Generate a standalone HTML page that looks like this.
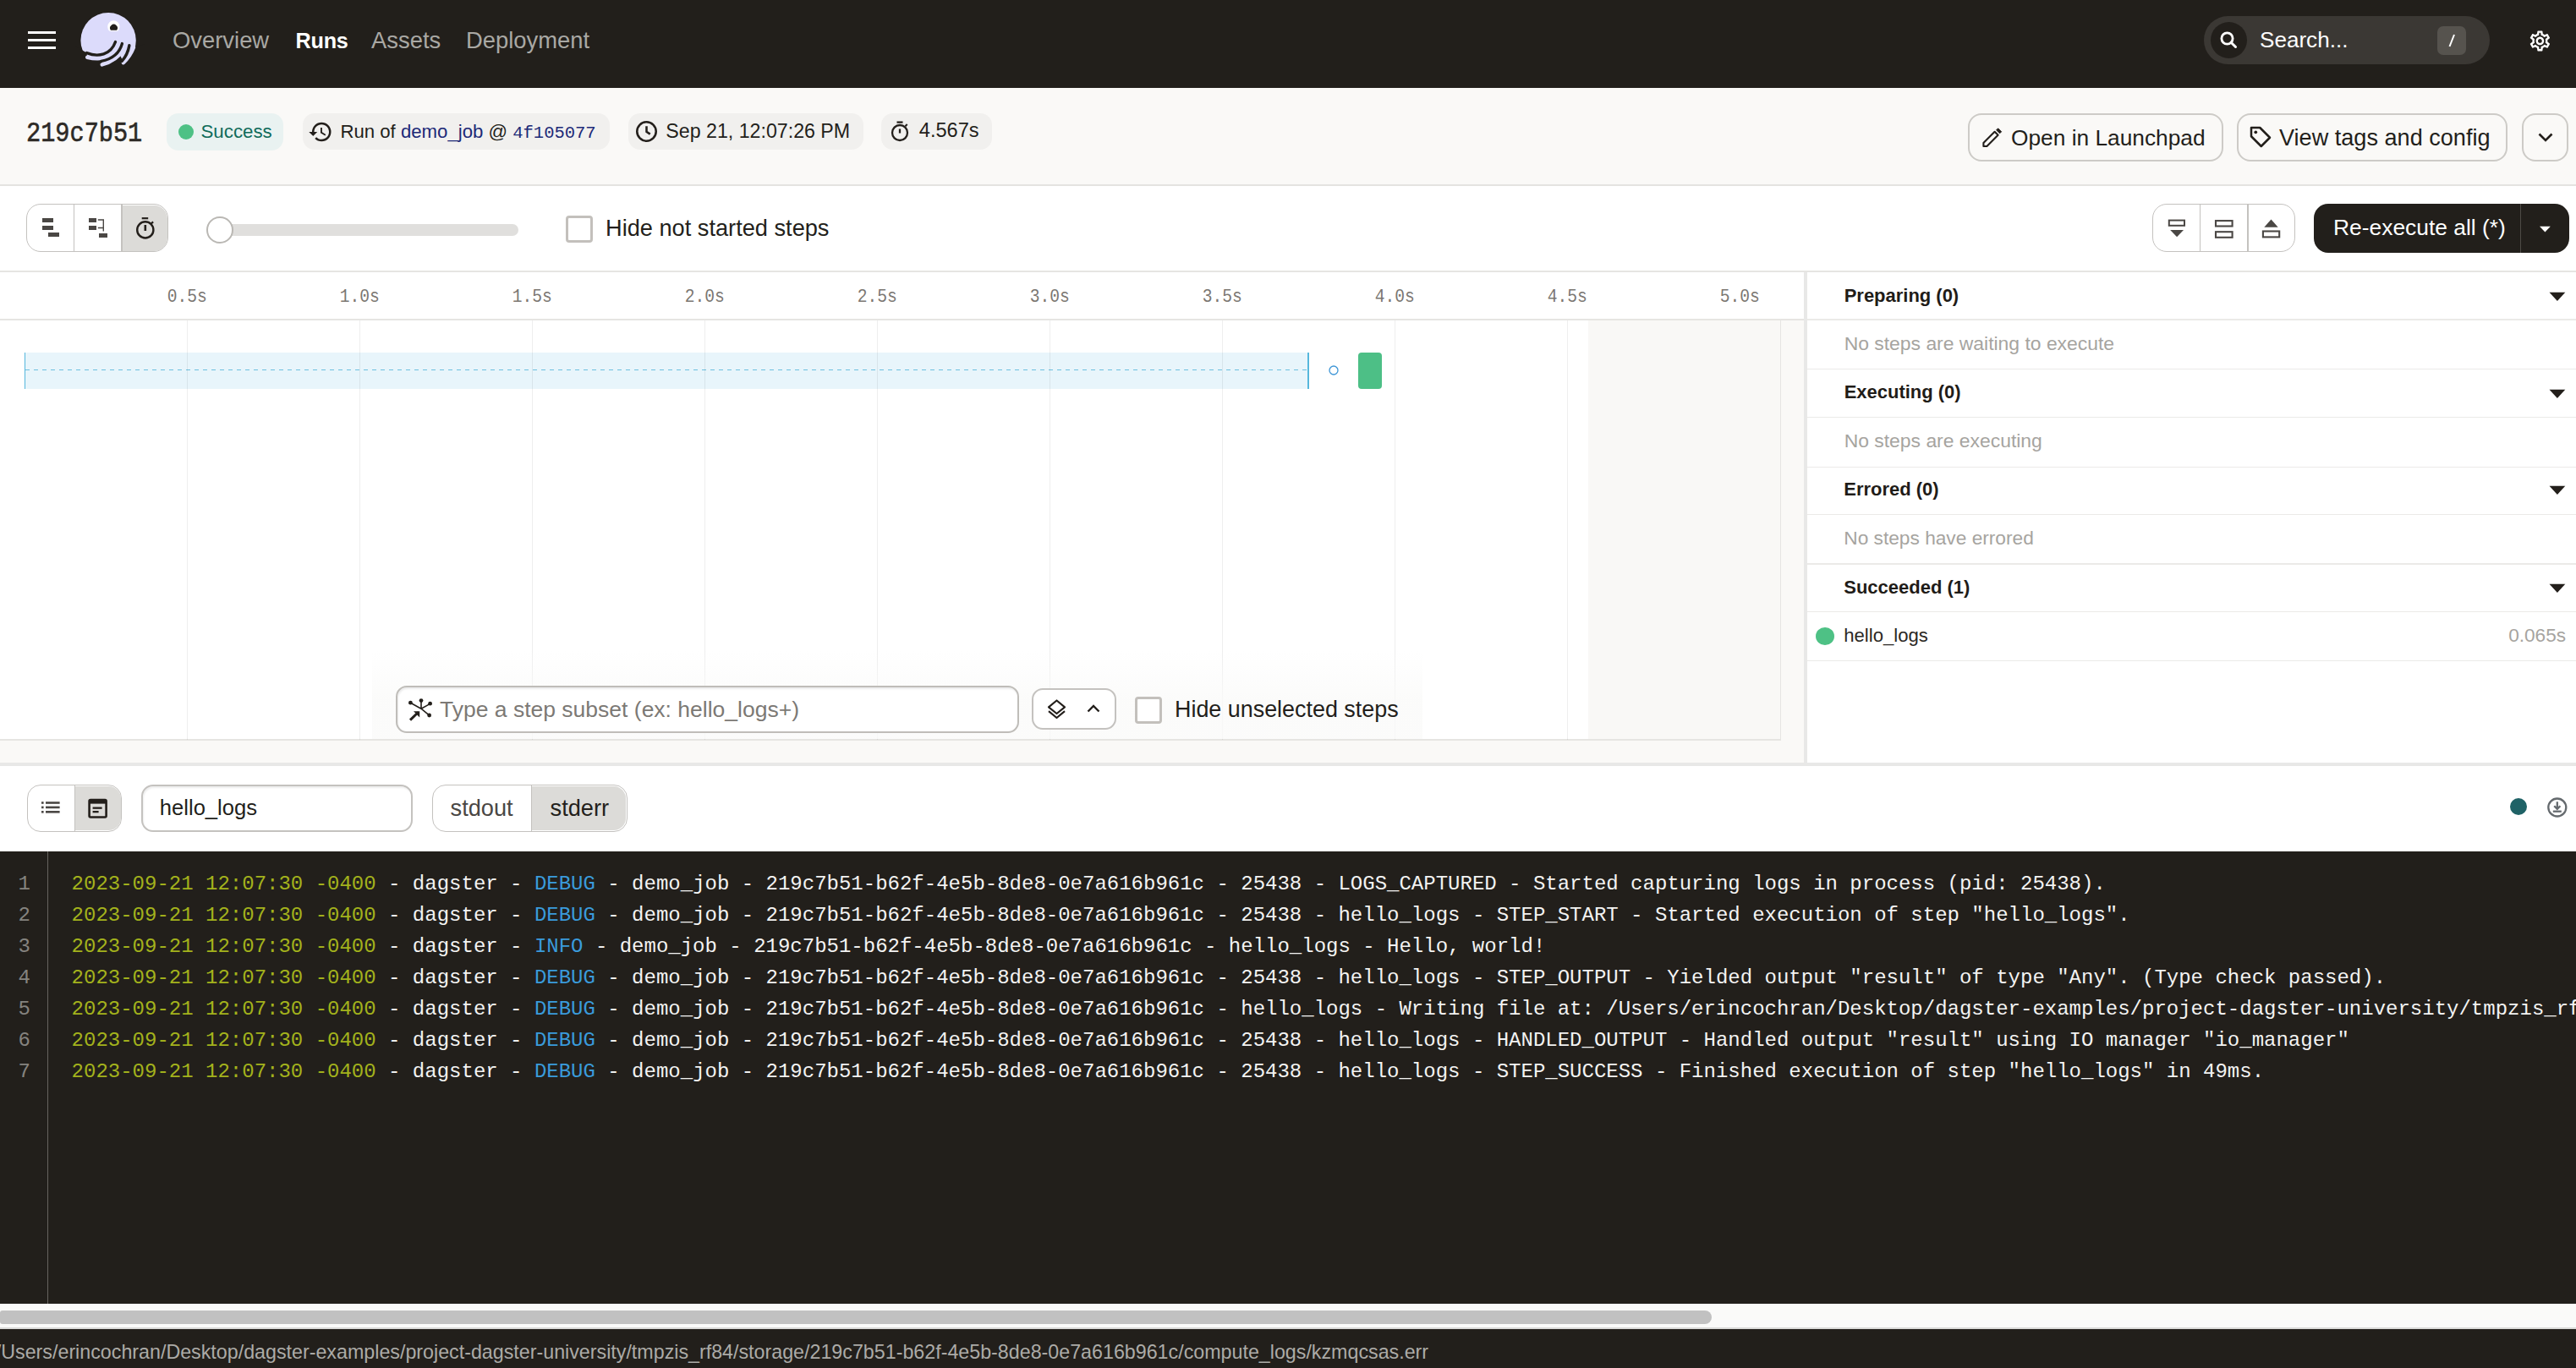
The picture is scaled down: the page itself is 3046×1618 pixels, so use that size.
<!DOCTYPE html>
<html><head><meta charset="utf-8"><style>
*{box-sizing:border-box;margin:0;padding:0}
html,body{width:3046px;height:1618px;overflow:hidden;background:#fff;font-family:"Liberation Sans",sans-serif;color:#231f1b;position:relative}
.a{position:absolute}
.t{white-space:nowrap}
svg{display:block}
</style></head><body>
<div class="a" style="left:0px;top:0px;width:3046px;height:104px;background:#221f1b"></div>
<div class="a" style="left:33px;top:37px;width:33px;height:3.4px;background:#fff"></div>
<div class="a" style="left:33px;top:46px;width:33px;height:3.4px;background:#fff"></div>
<div class="a" style="left:33px;top:55px;width:33px;height:3.4px;background:#fff"></div>
<svg class="a" style="left:88px;top:8px;" width="84" height="80" viewBox="0 0 84 80"><circle cx="40.1" cy="39.7" r="32.7" fill="#dcdbfb"/>
<path d="M0 46 L14.6 54.6 L15.2 59.8 Q24.56 62.14 33.05 60.9 L32.7 68.4 Q45.7 65.1 53.7 56.2 L57.9 66.1 Q66 58.5 70 48 L84 44 L84 80 L0 80 Z" fill="#221f1b"/>
<g stroke="#dcdbfb" stroke-width="4.5" fill="none" stroke-linecap="round">
<path d="M15.2 59.8 Q36 65 52.6 52.6"/>
<path d="M32.7 68.4 Q50 64 58.5 49.7"/>
<path d="M57.9 66.1 Q66 58.5 70 48"/>
</g>
<g stroke="#221f1b" stroke-width="3.4" fill="none" stroke-linecap="round">
<path d="M14.6 54.6 C28 60 43 57 48.5 41.5"/>
<path d="M31.6 64.3 C44 62 53 56 56.4 43.6"/>
<path d="M56.1 64.3 C60 60 63.5 54 64.9 45.6"/>
</g>
<path d="M41.45 28.7 A7.15 7.15 0 1 1 51.25 28.7Z" fill="#fff"/>
<path d="M42.95 27.8 A4.4 4.4 0 1 1 50.05 27.8Z" fill="#221f1b"/></svg>
<div class="a t " style="left:204px;top:28.52px;line-height:38.36px;font-size:27.4px;color:#a9a8a4;font-weight:normal;">Overview</div>
<div class="a t " style="left:349.5px;top:30.82px;line-height:35.28px;font-size:25.2px;color:#ffffff;font-weight:bold;letter-spacing:-0.2px">Runs</div>
<div class="a t " style="left:439px;top:28.52px;line-height:38.36px;font-size:27.4px;color:#a9a8a4;font-weight:normal;">Assets</div>
<div class="a t " style="left:551px;top:28.52px;line-height:38.36px;font-size:27.4px;color:#a9a8a4;font-weight:normal;">Deployment</div>
<div class="a" style="left:2606px;top:19px;width:338px;height:57px;background:#3b3834;border-radius:29px"></div>
<div class="a" style="left:2614px;top:26px;width:43px;height:43px;background:#221f1b;border-radius:50%"></div>
<svg class="a" style="left:2622px;top:34px;" width="28" height="28" viewBox="0 0 28 28"><circle cx="11.5" cy="11.5" r="6.6" stroke="#fff" stroke-width="2.8" fill="none"/><path d="M16.2 16.2 L21.5 21.5" stroke="#fff" stroke-width="3" stroke-linecap="round"/></svg>
<div class="a t " style="left:2672px;top:29.48px;line-height:36.54px;font-size:26.1px;color:#ffffff;font-weight:normal;">Search...</div>
<div class="a" style="left:2882px;top:31px;width:34px;height:34px;background:#56534e;border-radius:7px"></div>
<svg class="a" style="left:2882px;top:31px;" width="34" height="34" viewBox="0 0 34 34"><path d="M20 10 L14.5 24" stroke="#fff" stroke-width="2"/></svg>
<svg class="a" style="left:2988.6px;top:33.6px;" width="28.8" height="28.8" viewBox="0 0 24 24"><path fill="#fff" d="M19.43 12.98c.04-.32.07-.64.07-.98 0-.34-.03-.66-.07-.98l2.11-1.650c.19-.15.24-.42.12-.64l-2-3.46a.5.5 0 00-.61-.22l-2.49 1c-.52-.4-1.08-.73-1.69-.98l-.38-2.65A.488.488 0 0014 2h-4c-.25 0-.46.18-.49.42l-.38 2.65c-.61.25-1.17.59-1.69.98l-2.49-1a.566.566 0 00-.18-.03c-.17 0-.34.09-.43.25l-2 3.46c-.13.22-.07.49.12.64l2.11 1.65c-.04.32-.07.65-.07.98 0 .33.03.66.07.98l-2.11 1.65c-.19.15-.24.42-.12.64l2 3.46a.5.5 0 00.61.22l2.49-1c.52.4 1.08.73 1.690.98l.38 2.65c.03.24.24.42.49.42h4c.25 0 .46-.18.49-.42l.38-2.65c.61-.25 1.17-.59 1.69-.98l2.49 1c.06.02.12.03.18.03.17 0 .34-.09.43-.25l2-3.46c.12-.22.07-.49-.12-.64l-2.11-1.65zm-1.98-1.71c.04.31.05.52.05.73 0 .21-.02.43-.05.73l-.14 1.13.89.7 1.08.84-.7 1.21-1.27-.51-1.04-.42-.9.68c-.43.32-.84.56-1.25.73l-1.06.43-.16 1.13-.2 1.35h-1.4l-.19-1.35-.16-1.13-1.06-.43c-.43-.18-.83-.41-1.23-.71l-.91-.7-1.06.43-1.27.51-.7-1.21 1.08-.84.89-.7-.14-1.13c-.03-.31-.05-.54-.05-.74s.02-.43.05-.73l.14-1.13-.89-.7-1.08-.84.7-1.21 1.27.51 1.04.42.9-.68c.43-.32.84-.56 1.25-.73l1.06-.43.16-1.13.2-1.35h1.39l.19 1.35.16 1.13 1.06.43c.43.18.83.41 1.23.71l.91.7 1.06-.43 1.27-.51.7 1.21-1.07.85-.89.7.14 1.13zM12 8c-2.21 0-4 1.79-4 4s1.79 4 4 4 4-1.79 4-4-1.79-4-4-4zm0 6c-1.1 0-2-.9-2-2s.9-2 2-2 2 .9 2 2-.9 2-2 2z"/></svg>
<div class="a" style="left:0px;top:104px;width:3046px;height:115px;background:#faf9f7"></div>
<div class="a" style="left:0px;top:217.5px;width:3046px;height:2px;background:#e4e3e0"></div>
<div class="a t " style="left:31px;top:139.87px;line-height:40.04px;font-size:28.6px;color:#2d2a26;font-weight:normal;font-family:'Liberation Mono',monospace;transform:scaleY(1.14);transform-origin:0 27.63px;-webkit-text-stroke:0.5px #2d2a26">219c7b51</div>
<div class="a" style="left:197px;top:134px;width:138px;height:44px;background:#e9f2f1;border-radius:14px"></div>
<div class="a" style="left:211px;top:147px;width:18px;height:18px;background:#4ec185;border-radius:50%"></div>
<div class="a t " style="left:237.5px;top:139.66px;line-height:31.22px;font-size:22.3px;color:#106c5b;font-weight:normal;">Success</div>
<div class="a" style="left:358px;top:134px;width:363px;height:43px;background:#f1f0ee;border-radius:14px"></div>
<svg class="a" style="left:364px;top:140.5px;" width="30" height="30" viewBox="0 0 24 24"><path fill="#231f1b" d="M13 3a9 9 0 00-9 9H1l3.89 3.89.07.14L9 12H6c0-3.87 3.13-7 7-7s7 3.13 7 7-3.13 7-7 7c-1.93 0-3.68-.79-4.94-2.06l-1.42 1.42A8.954 8.954 0 0013 21a9 9 0 000-18zm-1 5v5l4.28 2.54.72-1.21-3.5-2.08V8H12z"/></svg>
<div class="a t " style="left:402.4px;top:139.76px;line-height:31.08px;font-size:22.2px;color:#231f1b;font-weight:normal;">Run of <span style="color:#1d2a78">demo_job</span> @ <span style="font-family:'Liberation Mono',monospace;color:#1d2a78;font-size:20.5px">4f105077</span></div>
<div class="a" style="left:743px;top:134px;width:278px;height:43px;background:#f1f0ee;border-radius:14px"></div>
<svg class="a" style="left:750px;top:141px;" width="29" height="29" viewBox="0 0 24 24"><circle cx="12" cy="12" r="9.3" stroke="#231f1b" stroke-width="2.1" fill="none"/><path d="M12 6.8V12.2l3.5 2.4" stroke="#231f1b" stroke-width="2.1" fill="none"/></svg>
<div class="a t " style="left:787.3px;top:138.72px;line-height:32.48px;font-size:23.2px;color:#231f1b;font-weight:normal;">Sep 21, 12:07:26 PM</div>
<div class="a" style="left:1042px;top:134px;width:131px;height:43px;background:#f1f0ee;border-radius:14px"></div>
<svg class="a" style="left:1051px;top:140.5px;" width="26" height="28" viewBox="0 0 26 28"><circle cx="13" cy="16" r="9" stroke="#231f1b" stroke-width="2.3" fill="none"/><path d="M13 11.5v5" stroke="#231f1b" stroke-width="2.3"/><path d="M9.5 3.6h7" stroke="#231f1b" stroke-width="2.3"/><path d="M19.5 8.3l2.2-2.2" stroke="#231f1b" stroke-width="2.1"/></svg>
<div class="a t " style="left:1086.8px;top:138.3px;line-height:33.04px;font-size:23.6px;color:#231f1b;font-weight:normal;">4.567s</div>
<div class="a" style="left:2327.3px;top:134.2px;width:302.2px;height:57.2px;border:2px solid #cdcbc7;border-radius:16px"></div>
<svg class="a" style="left:2343px;top:150px;" width="26" height="26" viewBox="0 0 26 26"><path d="M2.4 23 V19 L15.6 5.8 L19.6 9.8 L6.4 23 Z" stroke="#231f1b" stroke-width="2.1" fill="none" stroke-linejoin="round"/><path d="M17.6 3.8 L19.6 1.8 L23.6 5.8 L21.6 7.8Z" fill="#231f1b" stroke="#231f1b" stroke-width="1" stroke-linejoin="round"/></svg>
<div class="a t " style="left:2378px;top:144.77px;line-height:36.82px;font-size:26.3px;color:#231f1b;font-weight:normal;">Open in Launchpad</div>
<div class="a" style="left:2644.6px;top:134.2px;width:320.6px;height:57.2px;border:2px solid #cdcbc7;border-radius:16px"></div>
<svg class="a" style="left:2658px;top:147px;" width="30" height="30" viewBox="0 0 24 24"><path fill="none" stroke="#231f1b" stroke-width="2" stroke-linejoin="round" d="M3.2 3.2h8.2l9.4 9.4-8.2 8.2-9.4-9.4z"/><circle cx="7.4" cy="7.4" r="1.5" fill="#231f1b"/></svg>
<div class="a t " style="left:2695px;top:143.93px;line-height:37.94px;font-size:27.1px;color:#231f1b;font-weight:normal;">View tags and config</div>
<div class="a" style="left:2982px;top:134.2px;width:55.4px;height:57.2px;border:2px solid #cdcbc7;border-radius:16px"></div>
<svg class="a" style="left:2999px;top:154px;" width="22" height="16" viewBox="0 0 22 16"><path d="M3.5 4.5l7.5 7.5 7.5-7.5" stroke="#231f1b" stroke-width="2.6" fill="none"/></svg>
<div class="a" style="left:31.1px;top:241.1px;width:168.4px;height:57.4px;border:1.6px solid #c4c2bf;border-radius:17px;overflow:hidden"></div>
<div class="a" style="left:143.8px;top:242.7px;width:54.1px;height:54.2px;background:#dcdbd8;border-radius:0 15.5px 15.5px 0"></div>
<div class="a" style="left:86.9px;top:242px;width:1.6px;height:55.5px;background:#c4c2bf"></div>
<div class="a" style="left:143.1px;top:242px;width:1.6px;height:55.5px;background:#c4c2bf"></div>
<div class="a" style="left:49.5px;top:257.9px;width:13.9px;height:4.7px;background:#4a4744"></div>
<div class="a" style="left:49.5px;top:266.9px;width:13.9px;height:4.7px;background:#4a4744"></div>
<div class="a" style="left:56.6px;top:275.3px;width:13.8px;height:4.7px;background:#4a4744"></div>
<div class="a" style="left:104.7px;top:257.9px;width:9px;height:5px;background:#4a4744"></div>
<div class="a" style="left:104.7px;top:267.2px;width:9px;height:4.8px;background:#4a4744"></div>
<div class="a" style="left:117.4px;top:276.2px;width:9.3px;height:5.2px;background:#4a4744"></div>
<svg class="a" style="left:110px;top:255px;" width="20" height="22" viewBox="0 0 20 22"><path d="M5.8 5H12.3V18.6M5.8 14.5H12.3" stroke="#4a4744" stroke-width="1.4" fill="none"/></svg>
<svg class="a" style="left:158px;top:254px;" width="30" height="32" viewBox="0 0 30 32"><circle cx="13.8" cy="17.9" r="9.6" stroke="#231f1b" stroke-width="2.4" fill="none"/><path d="M13.8 12v7" stroke="#231f1b" stroke-width="2.6"/><path d="M9.7 4.2h7.5" stroke="#231f1b" stroke-width="2.2"/><path d="M20.5 10.8l2.6-2.4" stroke="#231f1b" stroke-width="2.2"/></svg>
<div class="a" style="left:262px;top:265.3px;width:351px;height:13.5px;background:#e0dfdd;border-radius:7px"></div>
<div class="a" style="left:244.2px;top:256.1px;width:31.4px;height:31.6px;border:2.8px solid #bab8b4;border-radius:50%;background:#fff"></div>
<div class="a" style="left:668.5px;top:255px;width:32.2px;height:31.5px;border:3.3px solid #c3c0bc;border-radius:4px;background:#fff"></div>
<div class="a t " style="left:716px;top:250.73px;line-height:38.08px;font-size:27.2px;color:#231f1b;font-weight:normal;">Hide not started steps</div>
<div class="a" style="left:2545.2px;top:241.2px;width:168.8px;height:57.3px;border:1.6px solid #c4c2bf;border-radius:17px"></div>
<div class="a" style="left:2600.8px;top:242px;width:1.6px;height:55.5px;background:#c4c2bf"></div>
<div class="a" style="left:2657.2px;top:242px;width:1.6px;height:55.5px;background:#c4c2bf"></div>
<svg class="a" style="left:2560px;top:256px;" width="30" height="28" viewBox="0 0 30 28"><rect x="4.8" y="4.6" width="18.2" height="6.2" stroke="#4a4744" stroke-width="2" fill="none"/><path d="M6.2 16h15.8l-7.9 8.2z" fill="#4a4744"/></svg>
<svg class="a" style="left:2616px;top:256px;" width="30" height="28" viewBox="0 0 30 28"><rect x="4" y="5.1" width="19.6" height="6.4" stroke="#4a4744" stroke-width="2.1" fill="none"/><rect x="4" y="18.2" width="19.6" height="6.6" stroke="#4a4744" stroke-width="2.1" fill="none"/></svg>
<svg class="a" style="left:2672px;top:256px;" width="30" height="28" viewBox="0 0 30 28"><path d="M5.3 12.7h16.4l-8.2-9.3z" fill="#4a4744"/><rect x="3.9" y="17.5" width="19.3" height="6.9" stroke="#4a4744" stroke-width="2.1" fill="none"/></svg>
<div class="a" style="left:2736px;top:241px;width:302px;height:57.7px;background:#221f1b;border-radius:17px"></div>
<div class="a" style="left:2979.5px;top:241px;width:1px;height:57.7px;background:#4d4a45"></div>
<div class="a t " style="left:2759px;top:251.37px;line-height:36.96px;font-size:26.4px;color:#ffffff;font-weight:normal;">Re-execute all (*)</div>
<svg class="a" style="left:3000px;top:264px;" width="20" height="14" viewBox="0 0 20 14"><path d="M3 3.7h12.8l-6.4 6.8z" fill="#fff"/></svg>
<div class="a" style="left:0px;top:320px;width:3046px;height:1.6px;background:#e6e5e2"></div>
<div class="a" style="left:0px;top:376.8px;width:2133px;height:1.8px;background:#e6e5e2"></div>
<div class="a t " style="left:-278.8px;width:1000px;text-align:center;top:339.26px;line-height:27.44px;font-size:19.6px;color:#7b7772;font-weight:normal;font-family:'Liberation Mono',monospace;transform:scaleY(1.12);transform-origin:50% 18.94px">0.5s</div>
<div class="a t " style="left:-74.80000000000001px;width:1000px;text-align:center;top:339.26px;line-height:27.44px;font-size:19.6px;color:#7b7772;font-weight:normal;font-family:'Liberation Mono',monospace;transform:scaleY(1.12);transform-origin:50% 18.94px">1.0s</div>
<div class="a t " style="left:129.20000000000005px;width:1000px;text-align:center;top:339.26px;line-height:27.44px;font-size:19.6px;color:#7b7772;font-weight:normal;font-family:'Liberation Mono',monospace;transform:scaleY(1.12);transform-origin:50% 18.94px">1.5s</div>
<div class="a t " style="left:333.20000000000005px;width:1000px;text-align:center;top:339.26px;line-height:27.44px;font-size:19.6px;color:#7b7772;font-weight:normal;font-family:'Liberation Mono',monospace;transform:scaleY(1.12);transform-origin:50% 18.94px">2.0s</div>
<div class="a t " style="left:537.2px;width:1000px;text-align:center;top:339.26px;line-height:27.44px;font-size:19.6px;color:#7b7772;font-weight:normal;font-family:'Liberation Mono',monospace;transform:scaleY(1.12);transform-origin:50% 18.94px">2.5s</div>
<div class="a t " style="left:741.2px;width:1000px;text-align:center;top:339.26px;line-height:27.44px;font-size:19.6px;color:#7b7772;font-weight:normal;font-family:'Liberation Mono',monospace;transform:scaleY(1.12);transform-origin:50% 18.94px">3.0s</div>
<div class="a t " style="left:945.2px;width:1000px;text-align:center;top:339.26px;line-height:27.44px;font-size:19.6px;color:#7b7772;font-weight:normal;font-family:'Liberation Mono',monospace;transform:scaleY(1.12);transform-origin:50% 18.94px">3.5s</div>
<div class="a t " style="left:1149.2px;width:1000px;text-align:center;top:339.26px;line-height:27.44px;font-size:19.6px;color:#7b7772;font-weight:normal;font-family:'Liberation Mono',monospace;transform:scaleY(1.12);transform-origin:50% 18.94px">4.0s</div>
<div class="a t " style="left:1353.2px;width:1000px;text-align:center;top:339.26px;line-height:27.44px;font-size:19.6px;color:#7b7772;font-weight:normal;font-family:'Liberation Mono',monospace;transform:scaleY(1.12);transform-origin:50% 18.94px">4.5s</div>
<div class="a t " style="left:1557.1999999999998px;width:1000px;text-align:center;top:339.26px;line-height:27.44px;font-size:19.6px;color:#7b7772;font-weight:normal;font-family:'Liberation Mono',monospace;transform:scaleY(1.12);transform-origin:50% 18.94px">5.0s</div>
<div class="a" style="left:1878.4px;top:378.6px;width:226.6px;height:496px;background:#f9f8f6"></div>
<div class="a" style="left:2104.6px;top:378.6px;width:1.6px;height:497.4px;background:#e6e5e2"></div>
<div class="a" style="left:2106.2px;top:378.6px;width:27px;height:523px;background:#faf9f7"></div>
<div class="a" style="left:0px;top:874.3px;width:2106px;height:1.7px;background:#e6e5e2"></div>
<div class="a" style="left:0px;top:876px;width:2133px;height:26px;background:#faf9f7"></div>
<div class="a" style="left:0px;top:901.8px;width:3046px;height:4.2px;background:#e8e8e7"></div>
<div class="a" style="left:2133.2px;top:321.6px;width:3.6px;height:580.2px;background:#e8e8e7"></div>
<div class="a" style="left:29.5px;top:417px;width:1517px;height:43px;background:#e8f5fb"></div>
<div class="a" style="left:28.6px;top:416.8px;width:1.8px;height:43.4px;background:#56b7dc"></div>
<div class="a" style="left:1545.9px;top:416.8px;width:1.8px;height:43.4px;background:#56b7dc"></div>
<div class="a" style="left:30.4px;top:436.6px;width:1515.5px;height:1.7px;background:repeating-linear-gradient(90deg,#6cc0df 0 5px,transparent 5px 10px)"></div>
<svg class="a" style="left:1570px;top:431px;" width="14" height="14" viewBox="0 0 14 14"><circle cx="7" cy="7" r="5" stroke="#3d95d6" stroke-width="1.3" fill="#fff"/></svg>
<div class="a" style="left:1606px;top:417px;width:27.5px;height:43px;background:#4dbf86;border-radius:4px"></div>
<div class="a" style="left:220.7px;top:378.6px;width:1px;height:496px;background:rgba(0,0,0,0.065)"></div>
<div class="a" style="left:424.7px;top:378.6px;width:1px;height:496px;background:rgba(0,0,0,0.065)"></div>
<div class="a" style="left:628.7px;top:378.6px;width:1px;height:496px;background:rgba(0,0,0,0.065)"></div>
<div class="a" style="left:832.7px;top:378.6px;width:1px;height:496px;background:rgba(0,0,0,0.065)"></div>
<div class="a" style="left:1036.7px;top:378.6px;width:1px;height:496px;background:rgba(0,0,0,0.065)"></div>
<div class="a" style="left:1240.7px;top:378.6px;width:1px;height:496px;background:rgba(0,0,0,0.065)"></div>
<div class="a" style="left:1444.7px;top:378.6px;width:1px;height:496px;background:rgba(0,0,0,0.065)"></div>
<div class="a" style="left:1648.7px;top:378.6px;width:1px;height:496px;background:rgba(0,0,0,0.065)"></div>
<div class="a" style="left:1852.7px;top:378.6px;width:1px;height:496px;background:rgba(0,0,0,0.065)"></div>
<div class="a" style="left:2136.8px;top:377.4px;width:910px;height:1.6px;background:#ebeae8"></div>
<div class="a" style="left:2136.8px;top:435.59999999999997px;width:910px;height:1.6px;background:#ebeae8"></div>
<div class="a" style="left:2136.8px;top:492.9px;width:910px;height:1.6px;background:#ebeae8"></div>
<div class="a" style="left:2136.8px;top:551.9000000000001px;width:910px;height:1.6px;background:#ebeae8"></div>
<div class="a" style="left:2136.8px;top:607.6px;width:910px;height:1.6px;background:#ebeae8"></div>
<div class="a" style="left:2136.8px;top:666.4000000000001px;width:910px;height:1.6px;background:#ebeae8"></div>
<div class="a" style="left:2136.8px;top:722.6px;width:910px;height:1.6px;background:#ebeae8"></div>
<div class="a" style="left:2136.8px;top:780.9000000000001px;width:910px;height:1.6px;background:#ebeae8"></div>
<div class="a t " style="left:2180.7px;top:334.5px;line-height:30.76px;font-size:21.97px;color:#1f1c18;font-weight:bold;">Preparing (0)</div>
<div class="a t " style="left:2180.7px;top:390.03px;line-height:32.06px;font-size:22.9px;color:#a6a4a0;font-weight:normal;">No steps are waiting to execute</div>
<div class="a t " style="left:2180.7px;top:449.4px;line-height:30.76px;font-size:21.97px;color:#1f1c18;font-weight:bold;">Executing (0)</div>
<div class="a t " style="left:2180.7px;top:505.33px;line-height:32.06px;font-size:22.9px;color:#a6a4a0;font-weight:normal;">No steps are executing</div>
<div class="a t " style="left:2180.3px;top:564.2px;line-height:30.76px;font-size:21.97px;color:#1f1c18;font-weight:bold;">Errored (0)</div>
<div class="a t " style="left:2180.3px;top:620.74px;line-height:31.78px;font-size:22.7px;color:#a6a4a0;font-weight:normal;">No steps have errored</div>
<div class="a t " style="left:2180.3px;top:679.7px;line-height:30.76px;font-size:21.97px;color:#1f1c18;font-weight:bold;">Succeeded (1)</div>
<svg class="a" style="left:3013px;top:342.6px;" width="22" height="16" viewBox="0 0 22 16"><path d="M1.5 2.8h18.8l-9.4 10.3z" fill="#231f1b"/></svg>
<svg class="a" style="left:3013px;top:457.5px;" width="22" height="16" viewBox="0 0 22 16"><path d="M1.5 2.8h18.8l-9.4 10.3z" fill="#231f1b"/></svg>
<svg class="a" style="left:3013px;top:572.3px;" width="22" height="16" viewBox="0 0 22 16"><path d="M1.5 2.8h18.8l-9.4 10.3z" fill="#231f1b"/></svg>
<svg class="a" style="left:3013px;top:687.8px;" width="22" height="16" viewBox="0 0 22 16"><path d="M1.5 2.8h18.8l-9.4 10.3z" fill="#231f1b"/></svg>
<div class="a" style="left:2147.2px;top:742.2px;width:21.7px;height:21px;background:#4ec185;border-radius:50%"></div>
<div class="a t " style="left:2180.3px;top:736.87px;line-height:30.94px;font-size:22.1px;color:#2b2824;font-weight:normal;">hello_logs</div>
<div class="a t " style="right:12px;top:736.34px;line-height:31.64px;font-size:22.6px;color:#a6a4a0;font-weight:normal;">0.065s</div>
<div class="a" style="left:440px;top:770px;width:1242px;height:104px;background:linear-gradient(180deg,rgba(250,250,249,0) 0%,rgba(250,250,249,.75) 55%)"></div>
<div class="a" style="left:468.2px;top:810.6px;width:736.8px;height:56.7px;border:2px solid #bfbdb9;border-radius:13px;background:#fff;box-shadow:inset 1px 2px 2px rgba(0,0,0,.08)"></div>
<svg class="a" style="left:481px;top:824px;" width="32" height="31" viewBox="0 0 32 31"><g stroke="#231f1b" stroke-width="1.6" fill="none"><path d="M17 14.2L4.4 7.2M17 14.2V5M17 14.2L27.6 8.4M17 14.2L26.4 21.8"/></g>
<g fill="#231f1b"><circle cx="4.4" cy="7.2" r="2.4"/><circle cx="17" cy="4.6" r="2.4"/><circle cx="27.6" cy="8.2" r="2.4"/><circle cx="26.6" cy="22" r="2.4"/></g>
<path d="M4 27.6L13.5 18.5" stroke="#231f1b" stroke-width="3"/><path d="M8 17.3h7.2v7.2z" fill="#231f1b"/></svg>
<div class="a t " style="left:520px;top:820.56px;line-height:37.1px;font-size:26.5px;color:#7c7975;font-weight:normal;">Type a step subset (ex: hello_logs+)</div>
<div class="a" style="left:1220px;top:814px;width:99.5px;height:49px;border:2px solid #c4c2bf;border-radius:13px;background:#fff"></div>
<svg class="a" style="left:1236px;top:826px;" width="28" height="26" viewBox="0 0 28 26"><path d="M13.5 2.5L23 10.3 13.5 18 4 10.3z" stroke="#231f1b" stroke-width="2.2" fill="none" stroke-linejoin="round"/><path d="M4 15.2L13.5 23 23 15.2" stroke="#231f1b" stroke-width="2.2" fill="none" stroke-linejoin="round"/></svg>
<svg class="a" style="left:1282px;top:830px;" width="22" height="16" viewBox="0 0 22 16"><path d="M4.5 11.5L11 5l6.5 6.5" stroke="#231f1b" stroke-width="2.4" fill="none"/></svg>
<div class="a" style="left:1342.3px;top:823.6px;width:31.8px;height:32px;border:3.3px solid #c3c0bc;border-radius:4px;background:#fff"></div>
<div class="a t " style="left:1389px;top:821.24px;line-height:37.66px;font-size:26.9px;color:#231f1b;font-weight:normal;">Hide unselected steps</div>
<div class="a" style="left:31.7px;top:928px;width:112.7px;height:55.5px;border:1.6px solid #c4c2bf;border-radius:16px;overflow:hidden"></div>
<div class="a" style="left:88.4px;top:929.6px;width:54.4px;height:52.3px;background:#dcdbd8;border-radius:0 14.5px 14.5px 0"></div>
<div class="a" style="left:87.6px;top:929px;width:1.6px;height:54px;background:#c4c2bf"></div>
<svg class="a" style="left:46px;top:944px;" width="28" height="22" viewBox="0 0 28 22"><g fill="#4a4744"><rect x="3" y="4.2" width="2.6" height="2.6"/><rect x="3" y="9.6" width="2.6" height="2.6"/><rect x="3" y="15" width="2.6" height="2.6"/><rect x="8" y="4.2" width="16.6" height="2.6"/><rect x="8" y="9.6" width="16.6" height="2.6"/><rect x="8" y="15" width="16.6" height="2.6"/></g></svg>
<svg class="a" style="left:102px;top:943px;" width="28" height="26" viewBox="0 0 28 26"><rect x="3.6" y="3" width="20" height="20.5" rx="1.5" stroke="#231f1b" stroke-width="2.6" fill="none"/><rect x="3.6" y="3" width="20" height="4.6" fill="#231f1b"/><rect x="7.6" y="11.5" width="11" height="2.3" fill="#231f1b"/><rect x="7.6" y="16" width="7" height="2.3" fill="#231f1b"/></svg>
<div class="a" style="left:166.8px;top:928px;width:321.2px;height:55.5px;border:2px solid #c4c2bf;border-radius:14px;background:#fff;box-shadow:inset 1px 2px 2px rgba(0,0,0,.07)"></div>
<div class="a t " style="left:188.8px;top:938.3px;line-height:35.84px;font-size:25.6px;color:#231f1b;font-weight:normal;">hello_logs</div>
<div class="a" style="left:511px;top:928px;width:231px;height:55.5px;border:1.6px solid #c4c2bf;border-radius:16px;overflow:hidden"></div>
<div class="a" style="left:628.8px;top:929.6px;width:111.6px;height:52.3px;background:#dcdbd8;border-radius:0 14.5px 14.5px 0"></div>
<div class="a" style="left:627.8px;top:929px;width:1.6px;height:54px;background:#c4c2bf"></div>
<div class="a t " style="left:532.6px;top:936.63px;line-height:38.08px;font-size:27.2px;color:#4a4744;font-weight:normal;">stdout</div>
<div class="a t " style="left:650.6px;top:936.63px;line-height:38.08px;font-size:27.2px;color:#231f1b;font-weight:normal;">stderr</div>
<div class="a" style="left:2968px;top:944px;width:20px;height:20px;background:#1f6266;border-radius:50%"></div>
<svg class="a" style="left:3010px;top:941px;" width="28" height="28" viewBox="0 0 28 28"><circle cx="13.8" cy="14" r="10.5" stroke="#656a6e" stroke-width="2.3" fill="none"/><path d="M13.8 7.3v8.3M10.2 12.2l3.6 3.6 3.6-3.6" stroke="#656a6e" stroke-width="2.3" fill="none"/><path d="M8.8 18.7h10" stroke="#656a6e" stroke-width="2.3"/></svg>
<div class="a" style="left:0px;top:1007px;width:3046px;height:534.6px;background:#221f1b"></div>
<div class="a" style="left:56.1px;top:1007px;width:1px;height:534.6px;background:#67645f"></div>
<div class="a t " style="right:3010px;top:1029.41px;line-height:33.6px;font-size:24px;color:#85837f;font-weight:normal;font-family:'Liberation Mono',monospace;">1</div>
<div class="a t " style="left:84.6px;top:1029.41px;line-height:33.6px;font-size:24px;color:#f3f3f2;font-weight:normal;font-family:'Liberation Mono',monospace;"><span style="color:#a3b21c">2023-09-21 12:07:30 -0400</span> - dagster - <span style="color:#3a9bdc">DEBUG</span> - demo_job - 219c7b51-b62f-4e5b-8de8-0e7a616b961c - 25438 - LOGS_CAPTURED - Started capturing logs in process (pid: 25438).</div>
<div class="a t " style="right:3010px;top:1066.41px;line-height:33.6px;font-size:24px;color:#85837f;font-weight:normal;font-family:'Liberation Mono',monospace;">2</div>
<div class="a t " style="left:84.6px;top:1066.41px;line-height:33.6px;font-size:24px;color:#f3f3f2;font-weight:normal;font-family:'Liberation Mono',monospace;"><span style="color:#a3b21c">2023-09-21 12:07:30 -0400</span> - dagster - <span style="color:#3a9bdc">DEBUG</span> - demo_job - 219c7b51-b62f-4e5b-8de8-0e7a616b961c - 25438 - hello_logs - STEP_START - Started execution of step "hello_logs".</div>
<div class="a t " style="right:3010px;top:1103.41px;line-height:33.6px;font-size:24px;color:#85837f;font-weight:normal;font-family:'Liberation Mono',monospace;">3</div>
<div class="a t " style="left:84.6px;top:1103.41px;line-height:33.6px;font-size:24px;color:#f3f3f2;font-weight:normal;font-family:'Liberation Mono',monospace;"><span style="color:#a3b21c">2023-09-21 12:07:30 -0400</span> - dagster - <span style="color:#3a9bdc">INFO</span> - demo_job - 219c7b51-b62f-4e5b-8de8-0e7a616b961c - hello_logs - Hello, world!</div>
<div class="a t " style="right:3010px;top:1140.41px;line-height:33.6px;font-size:24px;color:#85837f;font-weight:normal;font-family:'Liberation Mono',monospace;">4</div>
<div class="a t " style="left:84.6px;top:1140.41px;line-height:33.6px;font-size:24px;color:#f3f3f2;font-weight:normal;font-family:'Liberation Mono',monospace;"><span style="color:#a3b21c">2023-09-21 12:07:30 -0400</span> - dagster - <span style="color:#3a9bdc">DEBUG</span> - demo_job - 219c7b51-b62f-4e5b-8de8-0e7a616b961c - 25438 - hello_logs - STEP_OUTPUT - Yielded output "result" of type "Any". (Type check passed).</div>
<div class="a t " style="right:3010px;top:1177.41px;line-height:33.6px;font-size:24px;color:#85837f;font-weight:normal;font-family:'Liberation Mono',monospace;">5</div>
<div class="a t " style="left:84.6px;top:1177.41px;line-height:33.6px;font-size:24px;color:#f3f3f2;font-weight:normal;font-family:'Liberation Mono',monospace;"><span style="color:#a3b21c">2023-09-21 12:07:30 -0400</span> - dagster - <span style="color:#3a9bdc">DEBUG</span> - demo_job - 219c7b51-b62f-4e5b-8de8-0e7a616b961c - hello_logs - Writing file at: /Users/erincochran/Desktop/dagster-examples/project-dagster-university/tmpzis_rf84/storage/hello</div>
<div class="a t " style="right:3010px;top:1214.41px;line-height:33.6px;font-size:24px;color:#85837f;font-weight:normal;font-family:'Liberation Mono',monospace;">6</div>
<div class="a t " style="left:84.6px;top:1214.41px;line-height:33.6px;font-size:24px;color:#f3f3f2;font-weight:normal;font-family:'Liberation Mono',monospace;"><span style="color:#a3b21c">2023-09-21 12:07:30 -0400</span> - dagster - <span style="color:#3a9bdc">DEBUG</span> - demo_job - 219c7b51-b62f-4e5b-8de8-0e7a616b961c - 25438 - hello_logs - HANDLED_OUTPUT - Handled output "result" using IO manager "io_manager"</div>
<div class="a t " style="right:3010px;top:1251.41px;line-height:33.6px;font-size:24px;color:#85837f;font-weight:normal;font-family:'Liberation Mono',monospace;">7</div>
<div class="a t " style="left:84.6px;top:1251.41px;line-height:33.6px;font-size:24px;color:#f3f3f2;font-weight:normal;font-family:'Liberation Mono',monospace;"><span style="color:#a3b21c">2023-09-21 12:07:30 -0400</span> - dagster - <span style="color:#3a9bdc">DEBUG</span> - demo_job - 219c7b51-b62f-4e5b-8de8-0e7a616b961c - 25438 - hello_logs - STEP_SUCCESS - Finished execution of step "hello_logs" in 49ms.</div>
<div class="a" style="left:0px;top:1541.6px;width:3046px;height:30.6px;background:#fafaf9"></div>
<div class="a" style="left:0px;top:1541.6px;width:3046px;height:1.2px;background:#ffffff"></div>
<div class="a" style="left:0px;top:1570.4px;width:3046px;height:1.4px;background:#d9d9d7"></div>
<div class="a" style="left:0px;top:1550px;width:2023.5px;height:15.5px;background:#c1c1c1;border-radius:3px 8px 8px 3px"></div>
<div class="a" style="left:0px;top:1572.2px;width:3046px;height:45.8px;background:#221f1b"></div>
<div class="a t " style="left:-5.2px;top:1582.56px;line-height:32.55px;font-size:23.25px;color:#acaba7;font-weight:normal;">/Users/erincochran/Desktop/dagster-examples/project-dagster-university/tmpzis_rf84/storage/219c7b51-b62f-4e5b-8de8-0e7a616b961c/compute_logs/kzmqcsas.err</div>
</body></html>
